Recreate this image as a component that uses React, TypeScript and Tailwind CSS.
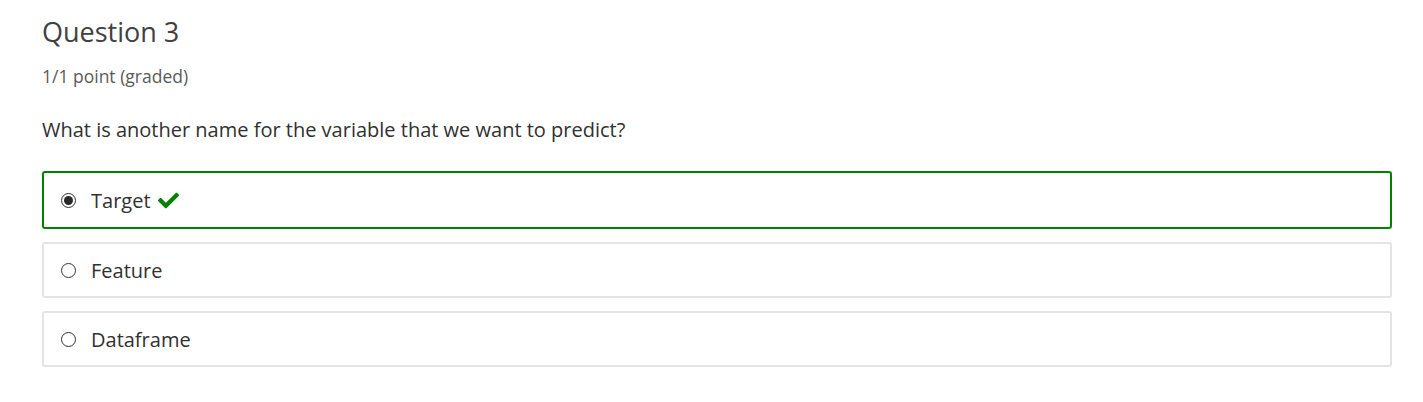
import { FaCheck } from "react-icons/fa";

const options = [
  { label: "Target", selected: true, correct: true },
  { label: "Feature", selected: false, correct: false },
  { label: "Dataframe", selected: false, correct: false },
];

export default function App() {
  return (
    <div className="min-h-screen bg-white pl-[42px] pr-[31px] pt-[14px] font-['Open_Sans',sans-serif]">
      <h3 className="text-[27px] leading-[36px] text-[#414141]">Question 3</h3>
      <div className="mt-[14px] text-[17.5px] leading-[24px] text-[#5a5a5a]">1/1 point (graded)</div>
      <p className="mt-[28px] text-[20px] leading-[28px] text-[#313131]">
        What is another name for the variable that we want to predict?
      </p>
      <div className="mt-[27px] flex flex-col gap-[13px]">
        {options.map((opt) => (
          <label
            key={opt.label}
            className={
              opt.correct
                ? "flex h-[58px] items-center rounded-[3px] border-2 border-[#008100] pl-[17px]"
                : "flex h-[56px] items-center rounded-[3px] border-2 border-[#e4e4e4] pl-[17px]"
            }
          >
            <span className="flex h-[15px] w-[15px] items-center justify-center rounded-full border border-[#333] bg-white">
              {opt.selected && <span className="h-[9px] w-[9px] rounded-full bg-[#2a2a2a]" />}
            </span>
            <span className="ml-[15px] pt-[1px] text-[20px] leading-[28px] text-[#313131]">{opt.label}</span>
            {opt.correct && <FaCheck className="ml-[7px] h-[21px] w-[21px] text-[#008100]" />}
          </label>
        ))}
      </div>
    </div>
  );
}
